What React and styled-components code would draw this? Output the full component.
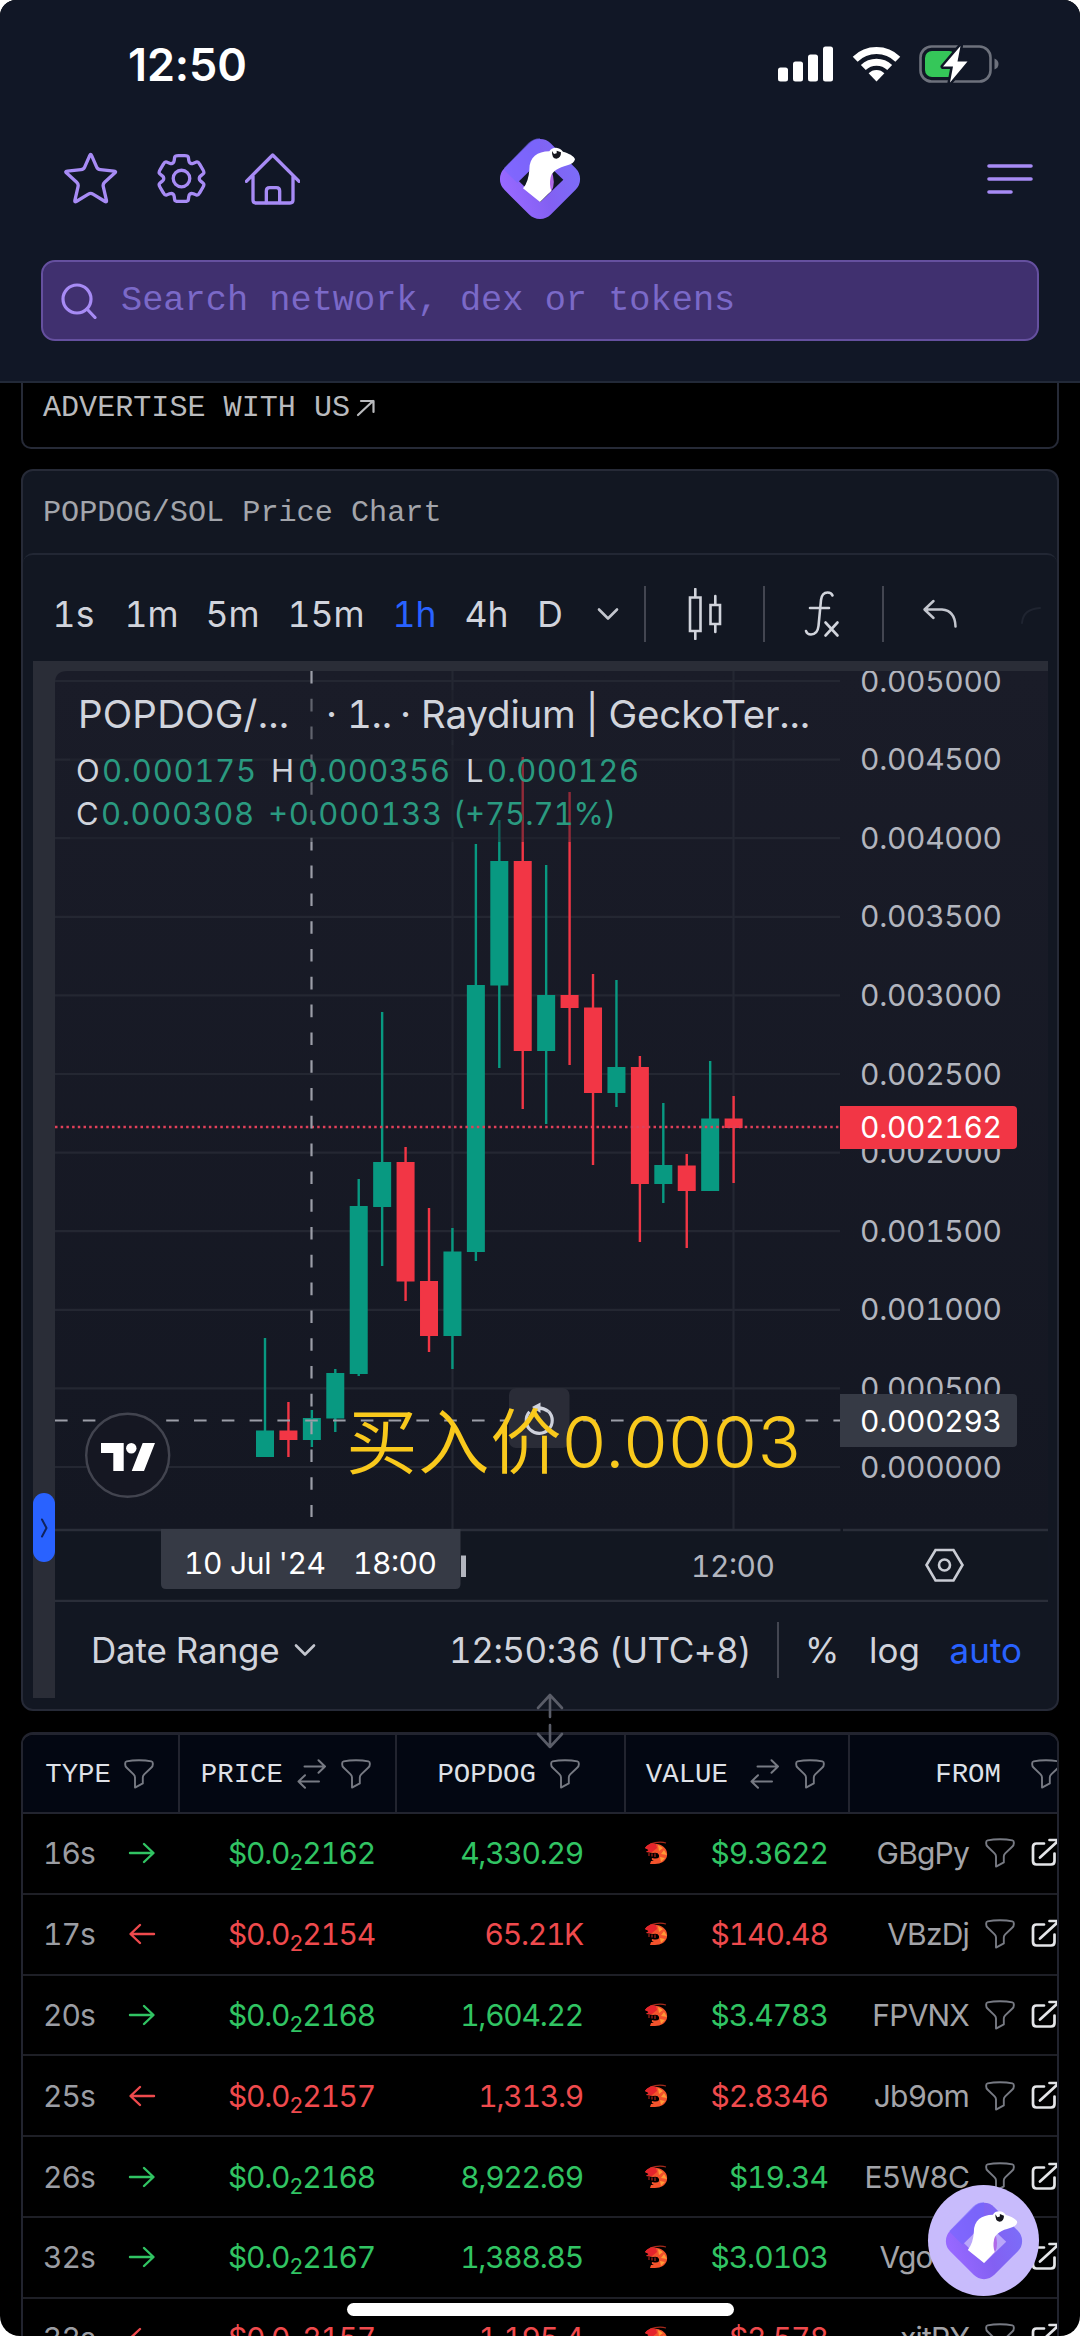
import React from 'react';
import styled, { createGlobalStyle } from 'styled-components';

const GREEN = '#089981';
const RED = '#f23645';

// [wick top, wick bottom, body top, body bottom, direction]
const candles = [
  [1338, 1457, 1430.5, 1457, 1],
  [1402, 1457, 1430.5, 1440, 0],
  [1410, 1447, 1418, 1440, 1],
  [1369, 1432, 1373, 1418.5, 1],
  [1179, 1376, 1206, 1374, 1],
  [1012, 1266, 1162, 1207, 1],
  [1147, 1301, 1162, 1281.5, 0],
  [1208, 1352, 1281, 1336, 0],
  [1228, 1369, 1251.5, 1336, 1],
  [844, 1261, 985, 1252, 1],
  [820, 1068, 861, 985.5, 1],
  [757, 1109, 861, 1051, 0],
  [865, 1124, 995, 1051, 1],
  [792, 1065, 995, 1008, 0],
  [974, 1165, 1007.5, 1093, 0],
  [980, 1107, 1067, 1093, 1],
  [1056, 1242, 1067, 1184, 0],
  [1103, 1203, 1165, 1184, 1],
  [1154, 1248, 1165.5, 1191, 0],
  [1061, 1191, 1118.5, 1191, 1],
  [1096, 1183, 1118.5, 1128, 0],
];

const prices = [
  '0.005000',
  '0.004500',
  '0.004000',
  '0.003500',
  '0.003000',
  '0.002500',
  '0.002000',
  '0.001500',
  '0.001000',
  '0.000500',
  '0.000000',
];

const trades = [
  { age: '16s', buy: true, price: '2162', amount: '4,330.29', value: '$9.3622', from: 'GBgPy' },
  { age: '17s', buy: false, price: '2154', amount: '65.21K', value: '$140.48', from: 'VBzDj' },
  { age: '20s', buy: true, price: '2168', amount: '1,604.22', value: '$3.4783', from: 'FPVNX' },
  { age: '25s', buy: false, price: '2157', amount: '1,313.9', value: '$2.8346', from: 'Jb9om' },
  { age: '26s', buy: true, price: '2168', amount: '8,922.69', value: '$19.34', from: 'E5W8C' },
  { age: '32s', buy: true, price: '2167', amount: '1,388.85', value: '$3.0103', from: 'Vgo8d' },
  { age: '32s', buy: false, price: '2157', amount: '1,195.4', value: '$2.578', from: 'xjtPY' },
];

// closed path through the points, with every corner rounded off
function roundedPath(points, amount) {
  const n = points.length;
  const mix = (a, b) => [a[0] + (b[0] - a[0]) * amount, a[1] + (b[1] - a[1]) * amount];
  return (
    points
      .map((p, i) => {
        const before = mix(p, points[(i + n - 1) % n]);
        const after = mix(p, points[(i + 1) % n]);
        return `${i ? 'L' : 'M'}${before} Q${p} ${after}`;
      })
      .join(' ') + 'Z'
  );
}

const gearPoints = [];
for (let k = 0; k < 6; k++) {
  [[-16, 72], [16, 72], [25, 54], [35, 54]].forEach(([offset, r]) => {
    const a = ((k * 60 - 90 + offset) * Math.PI) / 180;
    gearPoints.push([80 + r * Math.cos(a), 80 + r * Math.sin(a)]);
  });
}

const starPoints = [
  [80, 4], [101, 52], [158, 58], [116, 96], [129, 152],
  [80, 122], [31, 152], [44, 96], [2, 58], [59, 52],
];

function StarIcon() {
  return (
    <Line width="54" height="54" viewBox="0 0 162 162" $w={10}>
      <path d={roundedPath(starPoints, 0.14)} />
    </Line>
  );
}

function GearIcon() {
  return (
    <Line width="53" height="53" viewBox="0 0 160 160" $w={10}>
      <path d={roundedPath(gearPoints, 0.26)} />
      <circle cx="80" cy="80" r="25" />
    </Line>
  );
}

function HomeIcon() {
  return (
    <Line width="55" height="54" viewBox="0 0 165 162" $w={10}>
      <path d="M4 88 83 9 162 88M24 72V144Q24 153 33 153H135Q144 153 144 144V72" />
      <path d="M64 152V117Q64 107 74 107H94Q104 107 104 117V152" />
    </Line>
  );
}

function Snout({ size, hole }) {
  return (
    <svg width={size} height={size} viewBox="57 55 246 246">
      <defs>
        <linearGradient id="snout" x1="0.8" y1="0" x2="0.3" y2="1">
          <stop offset="0" stopColor="#7c6cf8" />
          <stop offset="0.5" stopColor="#8360f2" />
          <stop offset="1" stopColor="#9768ff" />
        </linearGradient>
      </defs>
      <rect x="81.5" y="79.5" width="197" height="197" rx="46" fill="url(#snout)" transform="rotate(45 180 178)" />
      <path d="M72 150 L112 190 180 122 180 56 Q160 56 145 70L73 144Z" fill="#7468ff" opacity="0.6" />
      <path d="M117 185 185 118 250 180 181 247Z" fill={hole} />
      <path d="M214 150Q228 190 215 213L205 222V160Z" fill="#b06ae8" />
      <path
        d="M180 247 129 206Q146 186 148 150C148 112 172 96 208 95Q214 84 228 84 242 85 249 96C264 100 284 109 285 119Q282 132 262 137C236 144 217 154 212 172Q207 196 214 213Z"
        fill="#fff"
      />
      <path d="M216 94Q215 117 229 117 243 116 243 98L230 93 230 101 222 103Z" fill="#15151c" />
    </svg>
  );
}

function FilterIcon() {
  return (
    <Line width="30" height="30" viewBox="0 0 30 30" $w={1.9} $color="#777a83">
      <path d="M15 1.3Q8 1.3 2.6 2.4 1.2 2.7 1.2 4.2V5.4Q1.2 7.2 2.5 8.5L9.6 15.4Q11 16.8 11 18.6V28.6L18.8 24.4V18.6Q18.8 16.8 20.2 15.4L27.4 8.5Q28.8 7.2 28.8 5.4V4.2Q28.8 2.7 27.4 2.4 22 1.3 15 1.3Z" />
    </Line>
  );
}

function SwapIcon() {
  return (
    <Line width="30" height="30" viewBox="0 0 30 30" $w={2} $color="#777a83">
      <path d="M7.5 7.5H28M21.5 1.2 28 7.5 21.5 13.8M22 22.5H1.5M8 16.2 1.5 22.5 8 28.8" />
    </Line>
  );
}

function ExternalIcon() {
  return (
    <Line width="30" height="30" viewBox="0 0 30 30" $w={2.7} $color="#e4e5e8">
      <path d="M13 5.5H5.5Q2 5.5 2 9V23Q2 26.5 5.5 26.5H20Q23.5 26.5 23.5 23V15.5M9 19.5 28 2M18.5 2H28V11.5" />
    </Line>
  );
}

function ShrimpIcon() {
  return (
    <svg width="24" height="24" viewBox="0 0 24 24">
      <path d="M6 3Q15 0 22 2" fill="none" stroke="#a52a1c" strokeWidth="1.3" />
      <path d="M1 7Q5 1 13 3C20 4 24 9 23 15 22 20 17 23 11 23L6 23 7 20 10 20Q7 19 8 17 16 19 15 14 14 11 9 12L2 11 5 9Z" fill="#f4532c" />
      <path d="M1 7Q5 1 12 3L13 7 8 11 2 11 5 9Z" fill="#e5242c" />
      <path d="M14 4 19 7 15 10ZM20 9 23 14 17 13ZM21 17 16 16 17 21Z" fill="#ff9a35" />
      <path d="M5 12V15M8 12.5V15.5M11 12.5V16" stroke="#c9281f" strokeWidth="1" />
    </svg>
  );
}

function TradeArrow({ buy }) {
  return (
    <Line width="28" height="24" viewBox="0 0 28 24" $w={2.4} $color={buy ? '#31c463' : '#ef4a4d'}>
      <path d={buy ? 'M2 12H25M16 3 25.5 12 16 21' : 'M26 12H3M12 3 2.5 12 12 21'} />
    </Line>
  );
}

function Chevron() {
  return (
    <Line width="22" height="14" viewBox="0 0 22 14" $w={2.6} $color="#c3c6ce">
      <path d="M2 2.5 11 11.5 20 2.5" />
    </Line>
  );
}

function StatusBar() {
  return (
    <StatusRow>
      <Clock>12:50</Clock>
      <StatusIcons>
        <svg width="56" height="38" viewBox="0 0 56 38" fill="#fff">
          <rect x="0" y="22.5" width="10" height="14" rx="2.5" />
          <rect x="15" y="16.5" width="10" height="20" rx="2.5" />
          <rect x="30" y="9.5" width="10" height="27" rx="2.5" />
          <rect x="45" y="1.5" width="10" height="35" rx="2.5" />
        </svg>
        <svg width="49" height="38" viewBox="0 0 49 38" fill="none" stroke="#fff" strokeWidth="7">
          <path d="M3.2 14.2A30.5 30.5 0 0 1 45.8 14.2" />
          <path d="M11.3 22.5A19 19 0 0 1 37.7 22.5" />
          <path d="M16.6 28.3A11 11 0 0 1 32.4 28.3L24.5 36.5Z" fill="#fff" stroke="none" />
        </svg>
        <svg width="80" height="38" viewBox="0 0 80 38">
          <rect x="1.5" y="1.5" width="70" height="35" rx="11" fill="none" stroke="#6d717c" strokeWidth="2.6" />
          <path d="M75.5 13.5Q79.5 15 79.5 19T75.5 24.5Z" fill="#6d717c" />
          <rect x="6" y="6" width="31" height="26" rx="7" fill="#35c759" />
          <path d="M41.5 1 24 21.5H34L31 37.5 48.5 16.5H38.5Z" fill="#fff" stroke="#111726" strokeWidth="5" paintOrder="stroke" strokeLinejoin="round" />
        </svg>
      </StatusIcons>
    </StatusRow>
  );
}

function Header() {
  return (
    <HeaderContainer>
      <StatusBar />
      <NavRow>
        <NavIcons>
          <StarIcon />
          <GearIcon />
          <HomeIcon />
        </NavIcons>
        <Snout size={82} hole="#111726" />
        <MenuButton>
          <Line width="46" height="34" viewBox="0 0 46 34" $w={3.6}>
            <path d="M2 4H44M2 17H44M2 30H24" />
          </Line>
        </MenuButton>
      </NavRow>
      <SearchBox>
        <Line width="36" height="36" viewBox="0 0 36 36" $w={3.2}>
          <circle cx="16" cy="16" r="14" />
          <path d="M26 26 34 34.5" />
        </Line>
        <SearchText>Search network, dex or tokens</SearchText>
      </SearchBox>
    </HeaderContainer>
  );
}

function Toolbar() {
  return (
    <ToolbarRow>
      <Intervals>
        <Interval>1s</Interval>
        <Interval>1m</Interval>
        <Interval>5m</Interval>
        <Interval>15m</Interval>
        <Interval $active>1h</Interval>
        <Interval>4h</Interval>
        <Interval>D</Interval>
        <Interval>
          <Chevron />
        </Interval>
      </Intervals>
      <ToolCell>
        <Line width="36" height="52" viewBox="0 0 36 52" $w={2.6} $color="#d1d4dc">
          <path d="M3 9.5H13.5V43H3ZM8.3 1V9.5M8.3 43V51M23.5 17H33V36H23.5ZM28.3 8V17M28.3 36V44" strokeLinejoin="miter" />
        </Line>
      </ToolCell>
      <ToolCell $shift={4}>
        <Line width="38" height="48" viewBox="0 0 38 48" $w={2.6} $color="#d1d4dc">
          <path d="M29.5 5.5Q28.5 2.5 24.5 2.5 19 2.5 18 10L15.5 36Q14.5 44.5 8 44.5 4 44.5 3 41M7 18H26M22.5 32.5 34.5 45.5M34.5 32.5 22.5 45.5" />
        </Line>
      </ToolCell>
      <UndoCell>
        <Line width="36" height="30" viewBox="0 0 36 30" $w={2.5} $color="#c3c6ce">
          <path d="M11.5 2 2.5 10.5 11.5 19M3 10.5H20Q33 11.5 33.5 27.5" />
        </Line>
        <Line width="22" height="26" viewBox="0 0 22 26" $w={2} $color="#1f2430">
          <path d="M2 22Q3 8 20 7" />
        </Line>
      </UndoCell>
    </ToolbarRow>
  );
}

// text pinned to a start and a length on the chart canvas
function Label({ x, y, w, size = 30, fill = '#b2b5be', children }) {
  return (
    <text x={x} y={y} textLength={w} fontSize={size} fill={fill}>
      {children}
    </text>
  );
}

function Chart() {
  return (
    <ChartCanvas width="993" height="931" viewBox="55 671 993 931">
      <defs>
        <linearGradient id="pane" x1="0" y1="0" x2="0" y2="1">
          <stop offset="0" stopColor="#1a1c28" />
          <stop offset="1" stopColor="#141722" />
        </linearGradient>
      </defs>
      <path d="M55 683Q55 671 67 671H1048V1530H55Z" fill="url(#pane)" />
      <rect x="55" y="1530" width="993" height="72" fill="#121721" />

      <g stroke="#242732" strokeWidth="2.2">
        {prices.map((p, i) => (
          <path key={p} d={`M55 ${681 + i * 78.6}H840`} />
        ))}
        <path d="M452.5 671V1529M733.5 671V1529" />
      </g>
      <path d="M55 1530H840.5M843 1530H1048M55 1601H1048" stroke="#2a2e39" strokeWidth="2.4" />

      {candles.map(([hi, lo, top, bottom, up], i) => {
        const x = 265 + i * 23.43;
        return (
          <g key={i} fill={up ? GREEN : RED}>
            <rect x={x - 1.2} y={hi} width="2.4" height={lo - hi} />
            <rect x={x - 9} y={top} width="18" height={bottom - top} />
          </g>
        );
      })}

      <path d="M55 1127H840" stroke="#e0405a" strokeWidth="2.4" strokeDasharray="2.5 3.2" />
      <path d="M311.5 671V1517" stroke="#9c9ea8" strokeWidth="2.2" strokeDasharray="12.6 15.2" />
      <path d="M55 1420.5H840" stroke="#9c9ea8" strokeWidth="2.2" strokeDasharray="12.6 15.2" />

      <rect x="70" y="690" width="755" height="50" fill="#1a1c28" opacity="0.45" />
      <rect x="70" y="745" width="560" height="97" fill="#1a1c28" opacity="0.45" />
      <Label x={78} y={728} w={211} size={38.5} fill="#d1d4dc">POPDOG/...</Label>
      <Label x={326} y={728} w={66} size={38.5} fill="#d1d4dc">· 1..</Label>
      <Label x={400} y={728} w={410} size={38.5} fill="#d1d4dc">· Raydium | GeckoTer...</Label>
      <Label x={76} y={782} w={24} size={31} fill="#d1d4dc">O</Label>
      <Label x={102} y={782} w={154} size={31} fill="#2a9a80">0.000175</Label>
      <Label x={271} y={782} w={24} size={31} fill="#d1d4dc">H</Label>
      <Label x={298} y={782} w={152} size={31} fill="#2a9a80">0.000356</Label>
      <Label x={466} y={782} w={19} size={31} fill="#d1d4dc">L</Label>
      <Label x={487} y={782} w={152} size={31} fill="#2a9a80">0.000126</Label>
      <Label x={76} y={825} w={24} size={31} fill="#d1d4dc">C</Label>
      <Label x={101} y={825} w={153} size={31} fill="#2a9a80">0.000308</Label>
      <Label x={268} y={825} w={174} size={31} fill="#2a9a80">+0.000133</Label>
      <Label x={453} y={825} w={163} size={31} fill="#2a9a80">(+75.71%)</Label>

      {prices.map((p, i) => (
        <Label key={p} x={860} y={691.5 + i * 78.6} w={142}>{p}</Label>
      ))}
      <path d="M840 1106H1013Q1017 1106 1017 1110V1145Q1017 1149 1013 1149H840Z" fill={RED} />
      <Label x={860} y={1138} w={142} fill="#fff">0.002162</Label>
      <path d="M840 1394H1013Q1017 1394 1017 1398V1443Q1017 1447 1013 1447H840Z" fill="#363a45" />
      <Label x={860} y={1431.5} w={142} fill="#fff">0.000293</Label>

      <circle cx="127.7" cy="1455.3" r="41.5" fill="#151722" stroke="#42444f" strokeWidth="2.4" />
      <g fill="#fff">
        <path d="M101 1443H123.7V1471H113.3V1453H101ZM142.7 1443H155L144 1471H131.7Z" />
        <circle cx="131.3" cy="1448.2" r="5.2" />
      </g>

      <rect x="509" y="1388" width="60.5" height="60" rx="7" fill="#2a2c37" />
      <g fill="none" stroke="#cfd2dc" strokeWidth="3.2">
        <path d="M548.5 1411.3A13 13 0 1 1 529.5 1411.8" />
        <path d="M540.5 1402.5V1413L532 1407Z" fill="#cfd2dc" stroke="none" />
        <path d="M538 1407.8Q544 1408 548.5 1411.5" />
      </g>

      <rect x="461" y="1555.5" width="5" height="21.5" fill="#b2b5be" />
      <Label x={691} y={1577} w={84}>12:00</Label>
      <path d="M161 1529H460.5V1584Q460.5 1589 455.5 1589H166Q161 1589 161 1584Z" fill="#363a45" />
      <Label x={184} y={1574} w={142} fill="#fff">10 Jul '24</Label>
      <Label x={353} y={1574} w={84} fill="#fff">18:00</Label>
      <g fill="none" stroke="#c9ccd4" strokeWidth="2.6">
        <path d="M935.5 1550H953.5L962.5 1565 953.5 1580.5H935.5L926.5 1565Z" />
        <circle cx="944.5" cy="1565" r="5.5" />
      </g>
    </ChartCanvas>
  );
}

function ChartCard() {
  return (
    <Card>
      <CardTitle>POPDOG/SOL Price Chart</CardTitle>
      <Widget>
        <Toolbar />
        <ChartFrame>
          <Rail>
            <RailTab>
              <Line width="8" height="20" viewBox="0 0 8 20" $w={2} $color="#10235e">
                <path d="M2 1.5 6.5 10 2 18.5" />
              </Line>
            </RailTab>
          </Rail>
          <ChartMain>
            <Chart />
            <RangeBar>
              <DateRange>
                Date Range
                <Chevron />
              </DateRange>
              <ClockText>12:50:36 (UTC+8)</ClockText>
              <Scale>
                <span>%</span>
                <span>log</span>
                <Auto>auto</Auto>
              </Scale>
            </RangeBar>
          </ChartMain>
          <Annotation>买入价0.0003</Annotation>
        </ChartFrame>
      </Widget>
      <Resizer>
        <Line width="28" height="56" viewBox="0 0 28 56" $w={2.6} $color="#5a5d68">
          <path d="M14 24V2M2 15 14 2 26 15M14 32V54M2 41 14 54 26 41" />
        </Line>
      </Resizer>
    </Card>
  );
}

function TradeTable() {
  return (
    <Table>
      <HeadRow>
        <HeadCell $gap={13} $right={24}>
          TYPE <FilterIcon />
        </HeadCell>
        <HeadCell $gap={14} $right={24}>
          PRICE <SwapIcon /> <FilterIcon />
        </HeadCell>
        <HeadCell $gap={14} $right={44}>
          POPDOG <FilterIcon />
        </HeadCell>
        <HeadCell $gap={15} $right={23}>
          VALUE <HeadGap /> <SwapIcon /> <FilterIcon />
        </HeadCell>
        <LastHeadCell $gap={30}>
          FROM <FilterIcon />
        </LastHeadCell>
      </HeadRow>
      {trades.map((t, i) => (
        <Row key={i} $buy={t.buy}>
          <TypeCell>
            {t.age} <TradeArrow buy={t.buy} />
          </TypeCell>
          <NumCell $right={22}>
            $0.0<Sub>2</Sub>
            {t.price}
          </NumCell>
          <NumCell $right={43}>{t.amount}</NumCell>
          <ValueCell>
            <ShrimpIcon />
            <span>{t.value}</span>
          </ValueCell>
          <FromCell>
            {t.from}
            <FilterIcon />
            <ExternalIcon />
          </FromCell>
        </Row>
      ))}
    </Table>
  );
}

function App() {
  return (
    <>
      <GlobalStyle />
      <Page>
        <Header />
        <Advert>
          ADVERTISE WITH US
          <Line width="20" height="18" viewBox="0 0 20 18" $w={2.2} $color="#b9babd">
            <path d="M2 16 17 2M5 2H17.5V13" />
          </Line>
        </Advert>
        <ChartCard />
        <TradeTable />
        <ChatButton>
          <Snout size={78} hole="#b9a6fa" />
        </ChatButton>
        <HomeIndicator />
      </Page>
    </>
  );
}

export default App;

const GlobalStyle = createGlobalStyle`
  * {
    box-sizing: border-box;
  }
  body {
    margin: 0;
    background: #fff;
    font-family: Inter, 'Noto Sans CJK SC', sans-serif;
    font-variant-numeric: tabular-nums;
  }
  svg {
    flex: none;
    display: block;
  }
`;

const Line = styled.svg`
  fill: none;
  stroke: ${({ $color }) => $color || '#a78bf5'};
  stroke-width: ${({ $w }) => $w};
  stroke-linecap: round;
  stroke-linejoin: round;
`;

const Page = styled.div`
  position: relative;
  width: 1080px;
  height: 2336px;
  overflow: hidden;
  background: #000;
  border-radius: 16px 16px 20px 20px;
`;

const HeaderContainer = styled.header`
  height: 383px;
  background: #111726;
  border-bottom: 2px solid #222938;
`;

const StatusRow = styled.div`
  display: flex;
  justify-content: space-between;
  align-items: center;
  height: 128px;
  padding: 0 81px 0 128px;
`;

const Clock = styled.span`
  color: #fff;
  font-size: 45px;
  font-weight: 600;
  font-variant-numeric: normal;
  letter-spacing: -0.1px;
`;

const StatusIcons = styled.div`
  display: flex;
  gap: 18px;
`;

const NavRow = styled.div`
  display: grid;
  grid-template-columns: 1fr 82px 1fr;
  align-items: center;
  height: 102px;
  padding: 0 47px 0 64px;
  margin-left: -17px;
`;

const NavIcons = styled.div`
  display: flex;
  gap: 37px;
  padding-left: 17px;
`;

const MenuButton = styled.div`
  display: flex;
  justify-content: flex-end;
`;

const SearchBox = styled.div`
  display: flex;
  align-items: center;
  gap: 24px;
  height: 81px;
  margin: 30px 41px 0;
  padding-left: 18px;
  background: #40306f;
  border: 2px solid #65509f;
  border-radius: 14px;
`;

const SearchText = styled.span`
  color: #7b69c8;
  font-family: 'Liberation Mono', monospace;
  font-size: 35.3px;
`;

const Advert = styled.div`
  display: flex;
  gap: 6px;
  align-items: center;
  width: 1038px;
  height: 66px;
  margin: 0 21px 20px;
  padding: 0 0 15px 20px;
  color: #b9babd;
  font-family: 'Liberation Mono', monospace;
  font-size: 30.1px;
  border: 2px solid #262a37;
  border-top: none;
  border-radius: 0 0 10px 10px;
`;

const Card = styled.section`
  position: relative;
  width: 1038px;
  height: 1242px;
  margin: 0 21px;
  background: #121722;
  border: 2px solid #262a37;
  border-radius: 12px;
`;

const CardTitle = styled.div`
  height: 82px;
  padding: 25px 0 0 20px;
  color: #a3a5ab;
  font-family: 'Liberation Mono', monospace;
  font-size: 30.2px;
`;

const Widget = styled.div`
  height: 1156px;
  padding: 0 9px 0 10px;
  border-top: 2px solid #222734;
  border-radius: 10px;
`;

const ToolbarRow = styled.div`
  display: flex;
  align-items: center;
  height: 106px;
  padding-top: 12px;
`;

const Intervals = styled.div`
  display: grid;
  grid-template-columns: 81px 75px 87px 100px 77px 67px 60px 56px;
  justify-items: center;
  align-items: center;
  margin-right: 8px;
`;

const Interval = styled.span`
  color: ${({ $active }) => ($active ? '#2962ff' : '#d1d4dc')};
  font-size: 35.5px;
`;

const ToolCell = styled.div`
  display: flex;
  flex: none;
  align-items: center;
  justify-content: center;
  width: 119px;
  height: 56px;
  padding-right: ${({ $shift }) => $shift || 0}px;
  border-left: 2px solid #434651;
`;

const UndoCell = styled(ToolCell)`
  justify-content: flex-start;
  gap: 62px;
  width: 164px;
  padding-left: 38px;
`;

const ChartFrame = styled.div`
  position: relative;
  display: flex;
  border-top: 10px solid #2a2d37;
`;

const Rail = styled.div`
  display: flex;
  align-items: flex-start;
  width: 22px;
  height: 1027px;
  padding-top: 822px;
  background: #2a2d37;
`;

const RailTab = styled.div`
  display: flex;
  align-items: center;
  justify-content: center;
  width: 22px;
  height: 69px;
  background: #2962ff;
  border-radius: 11px;
`;

const ChartMain = styled.div`
  display: flex;
  flex-direction: column;
  width: 993px;
`;

const ChartCanvas = styled.svg`
  font-family: Inter, sans-serif;
  background: #2a2d37;
`;

const RangeBar = styled.div`
  display: flex;
  align-items: center;
  height: 96px;
  color: #d1d4dc;
  font-size: 35px;
`;

const DateRange = styled.div`
  display: flex;
  align-items: center;
  gap: 15px;
  width: 394px;
  padding-left: 36px;
  letter-spacing: -0.2px;
`;

const ClockText = styled.span`
  width: 328px;
  letter-spacing: -0.5px;
  white-space: nowrap;
`;

const Scale = styled.div`
  display: flex;
  align-items: center;
  justify-content: space-between;
  width: 245px;
  height: 56px;
  padding-left: 26px;
  border-left: 2px solid #434651;
`;

const Auto = styled.span`
  color: #2962ff;
`;

const Annotation = styled.div`
  position: absolute;
  left: 313px;
  top: 719px;
  color: #f9c91c;
  font-size: 71.6px;
  font-weight: 350;
  font-variant-numeric: normal;
  letter-spacing: 0.4px;
  line-height: 104px;
  white-space: nowrap;
`;

const Resizer = styled.div`
  position: absolute;
  left: 513px;
  top: 1222px;
  z-index: 2;
`;

const Table = styled.section`
  width: 1038px;
  height: 640px;
  margin: 21px 21px 0;
  overflow: hidden;
  border: 2px solid #22242f;
  border-top-width: 3px;
  border-radius: 12px;
`;

const columns = '157px 217px 229px 224px 207px';

const HeadRow = styled.div`
  display: grid;
  grid-template-columns: ${columns};
  height: 79px;
  background: #030712;
  border-bottom: 2px solid #22242f;
`;

const HeadCell = styled.div`
  display: flex;
  align-items: center;
  justify-content: flex-end;
  gap: ${({ $gap }) => $gap}px;
  padding-right: ${({ $right }) => $right}px;
  padding-top: 1px;
  color: #dfe1e7;
  font-family: 'Liberation Mono', monospace;
  font-size: 27.4px;
  border-right: 2px solid #22242f;
`;

const LastHeadCell = styled(HeadCell)`
  margin-right: -4px;
  padding-right: 0;
  border-right: none;
`;

const HeadGap = styled.span`
  margin-left: -8px;
`;

const Row = styled.div`
  display: grid;
  grid-template-columns: ${columns};
  align-items: center;
  height: 80.8px;
  color: ${({ $buy }) => ($buy ? '#31c463' : '#ef4a4d')};
  font-size: 30px;
  letter-spacing: -1px;
  border-bottom: 2px solid #1e1f26;
`;

const TypeCell = styled.div`
  display: flex;
  align-items: center;
  justify-content: space-between;
  padding: 0 24px 0 20px;
  color: #9b9da3;
`;

const NumCell = styled.div`
  padding-right: ${({ $right }) => $right}px;
  text-align: right;
  letter-spacing: -1.25px;
`;

const Sub = styled.sub`
  font-size: 22px;
  line-height: 0;
  vertical-align: -6px;
`;

const ValueCell = styled.div`
  display: flex;
  align-items: center;
  justify-content: space-between;
  padding: 0 22px 0 18px;
`;

const FromCell = styled.div`
  display: flex;
  align-items: center;
  justify-content: flex-end;
  gap: 16px;
  margin-right: -4px;
  color: #a3a4a9;
  letter-spacing: -0.8px;
`;

const ChatButton = styled.div`
  position: absolute;
  right: 41px;
  bottom: 40px;
  display: flex;
  align-items: center;
  justify-content: center;
  width: 111px;
  height: 111px;
  background: #c8bbfc;
  border-radius: 50%;
`;

const HomeIndicator = styled.div`
  position: absolute;
  left: 347px;
  bottom: 20px;
  width: 387px;
  height: 13px;
  background: #fff;
  border-radius: 7px;
`;
